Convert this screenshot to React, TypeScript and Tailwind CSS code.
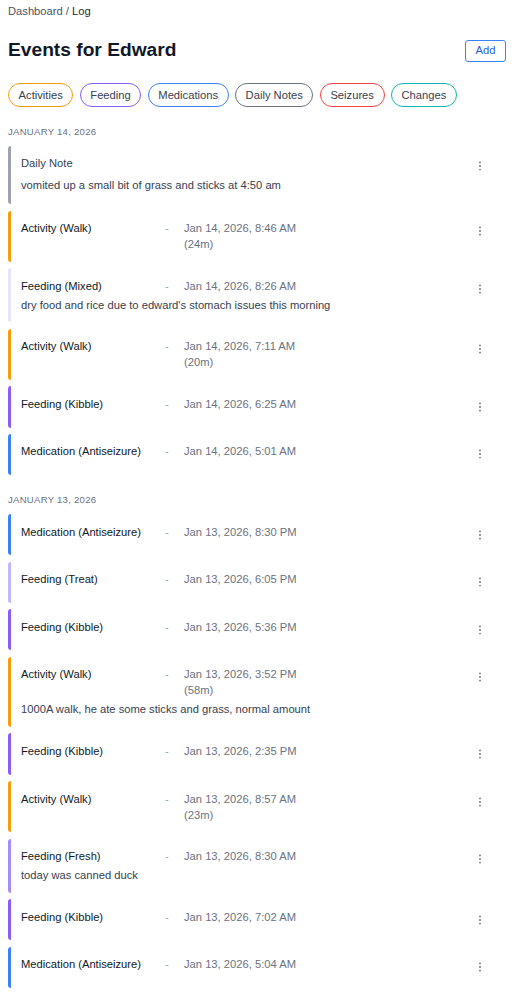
import React from 'react'

type Entry = {
  title: string
  date?: string
  duration?: string
  note?: string
  bar: string
  muted?: boolean
}

const FILTERS = [
  { label: 'Activities', border: 'border-[#f59e0b]' },
  { label: 'Feeding', border: 'border-[#8b5cf6]' },
  { label: 'Medications', border: 'border-[#3b82f6]' },
  { label: 'Daily Notes', border: 'border-[#6b7280]' },
  { label: 'Seizures', border: 'border-[#ef4444]' },
  { label: 'Changes', border: 'border-[#14b8a6]' },
]

const DAYS: { heading: string; entries: Entry[] }[] = [
  {
    heading: 'January 14, 2026',
    entries: [
      {
        title: 'Daily Note',
        note: 'vomited up a small bit of grass and sticks at 4:50 am',
        bar: 'border-[#9ca3af]',
        muted: true,
      },
      { title: 'Activity (Walk)', date: 'Jan 14, 2026, 8:46 AM', duration: '(24m)', bar: 'border-[#f59e0b]' },
      {
        title: 'Feeding (Mixed)',
        date: 'Jan 14, 2026, 8:26 AM',
        note: "dry food and rice due to edward's stomach issues this morning",
        bar: 'border-[#e6e3fa]',
      },
      { title: 'Activity (Walk)', date: 'Jan 14, 2026, 7:11 AM', duration: '(20m)', bar: 'border-[#f59e0b]' },
      { title: 'Feeding (Kibble)', date: 'Jan 14, 2026, 6:25 AM', bar: 'border-[#8b5cf6]' },
      { title: 'Medication (Antiseizure)', date: 'Jan 14, 2026, 5:01 AM', bar: 'border-[#3b82f6]' },
    ],
  },
  {
    heading: 'January 13, 2026',
    entries: [
      { title: 'Medication (Antiseizure)', date: 'Jan 13, 2026, 8:30 PM', bar: 'border-[#3b82f6]' },
      { title: 'Feeding (Treat)', date: 'Jan 13, 2026, 6:05 PM', bar: 'border-[#c4b5fd]' },
      { title: 'Feeding (Kibble)', date: 'Jan 13, 2026, 5:36 PM', bar: 'border-[#8b5cf6]' },
      {
        title: 'Activity (Walk)',
        date: 'Jan 13, 2026, 3:52 PM',
        duration: '(58m)',
        note: '1000A walk, he ate some sticks and grass, normal amount',
        bar: 'border-[#f59e0b]',
      },
      { title: 'Feeding (Kibble)', date: 'Jan 13, 2026, 2:35 PM', bar: 'border-[#8b5cf6]' },
      { title: 'Activity (Walk)', date: 'Jan 13, 2026, 8:57 AM', duration: '(23m)', bar: 'border-[#f59e0b]' },
      {
        title: 'Feeding (Fresh)',
        date: 'Jan 13, 2026, 8:30 AM',
        note: 'today was canned duck',
        bar: 'border-[#a78bfa]',
      },
      { title: 'Feeding (Kibble)', date: 'Jan 13, 2026, 7:02 AM', bar: 'border-[#8b5cf6]' },
      { title: 'Medication (Antiseizure)', date: 'Jan 13, 2026, 5:04 AM', bar: 'border-[#3b82f6]' },
    ],
  },
]

function Dots() {
  return (
    <button className="flex h-[22px] w-[24px] shrink-0 items-center justify-center text-[#6b7280]" aria-label="More">
      <svg width="12" height="12" viewBox="0 0 12 12" fill="currentColor">
        <circle cx="6" cy="2.4" r="0.9" />
        <circle cx="6" cy="6" r="0.9" />
        <circle cx="6" cy="9.6" r="0.9" />
      </svg>
    </button>
  )
}

function EventRow({ entry }: { entry: Entry }) {
  return (
    <div
      className={`flex items-start rounded-[3px] border-l-[3px] bg-white pl-[10px] pr-[14px] ${
        entry.muted ? 'pt-[9px] pb-[11.6px]' : 'py-[9.6px]'
      } ${entry.bar}`}
    >
      <div className="min-w-0 flex-1">
        {entry.date ? (
          <div className="grid grid-cols-[144px_19px_1fr] leading-[16px]">
            <span className="text-[#111827]">{entry.title}</span>
            <span className="text-[#9ca3af]">-</span>
            <div className="text-[#6b7280]">
              <div>{entry.date}</div>
              {entry.duration && <div>{entry.duration}</div>}
            </div>
          </div>
        ) : (
          <div className="leading-[16px] text-[#374151]">{entry.title}</div>
        )}
        {entry.note && (
          <p className={`${entry.muted ? 'mt-[5.6px]' : 'mt-[3px]'} leading-[16px] text-[#374151]`}>{entry.note}</p>
        )}
      </div>
      <Dots />
    </div>
  )
}

export default function App() {
  return (
    <div className="min-h-screen bg-white px-[8px] pt-[3px] pb-[12px] font-['Liberation_Sans',Arial,sans-serif] text-[11.2px]">
      {/* Breadcrumb */}
      <nav className="leading-[16px] text-[#4b5563]">
        <span>Dashboard</span> <span>/</span> <span className="text-[#1f2937]">Log</span>
      </nav>

      {/* Title + add */}
      <div className="mt-[19px] flex h-[24px] items-center justify-between">
        <h1 className="text-[19.2px] font-bold leading-[24px] text-[#111827]">Events for Edward</h1>
        <button className="mt-[1px] flex h-[22px] w-[41px] items-center justify-center rounded-[3px] border border-[#3b82f6] text-[11.2px] text-[#2563eb]">
          Add
        </button>
      </div>

      {/* Filters */}
      <div className="mt-[21px] flex gap-[6.4px]">
        {FILTERS.map((f) => (
          <button
            key={f.label}
            className={`flex h-[24px] items-center rounded-full border px-[9.6px] text-[11.2px] text-[#374151] ${f.border}`}
          >
            {f.label}
          </button>
        ))}
      </div>

      {/* Days */}
      {DAYS.map((day) => (
        <section key={day.heading} className="mt-[18px]">
          <h2 className="mb-[7px] text-[9.6px] uppercase leading-[14px] tracking-wide text-[#6b7280]">{day.heading}</h2>
          <div className="flex flex-col gap-[6.4px]">
            {day.entries.map((e, i) => (
              <EventRow key={i} entry={e} />
            ))}
          </div>
        </section>
      ))}
    </div>
  )
}
